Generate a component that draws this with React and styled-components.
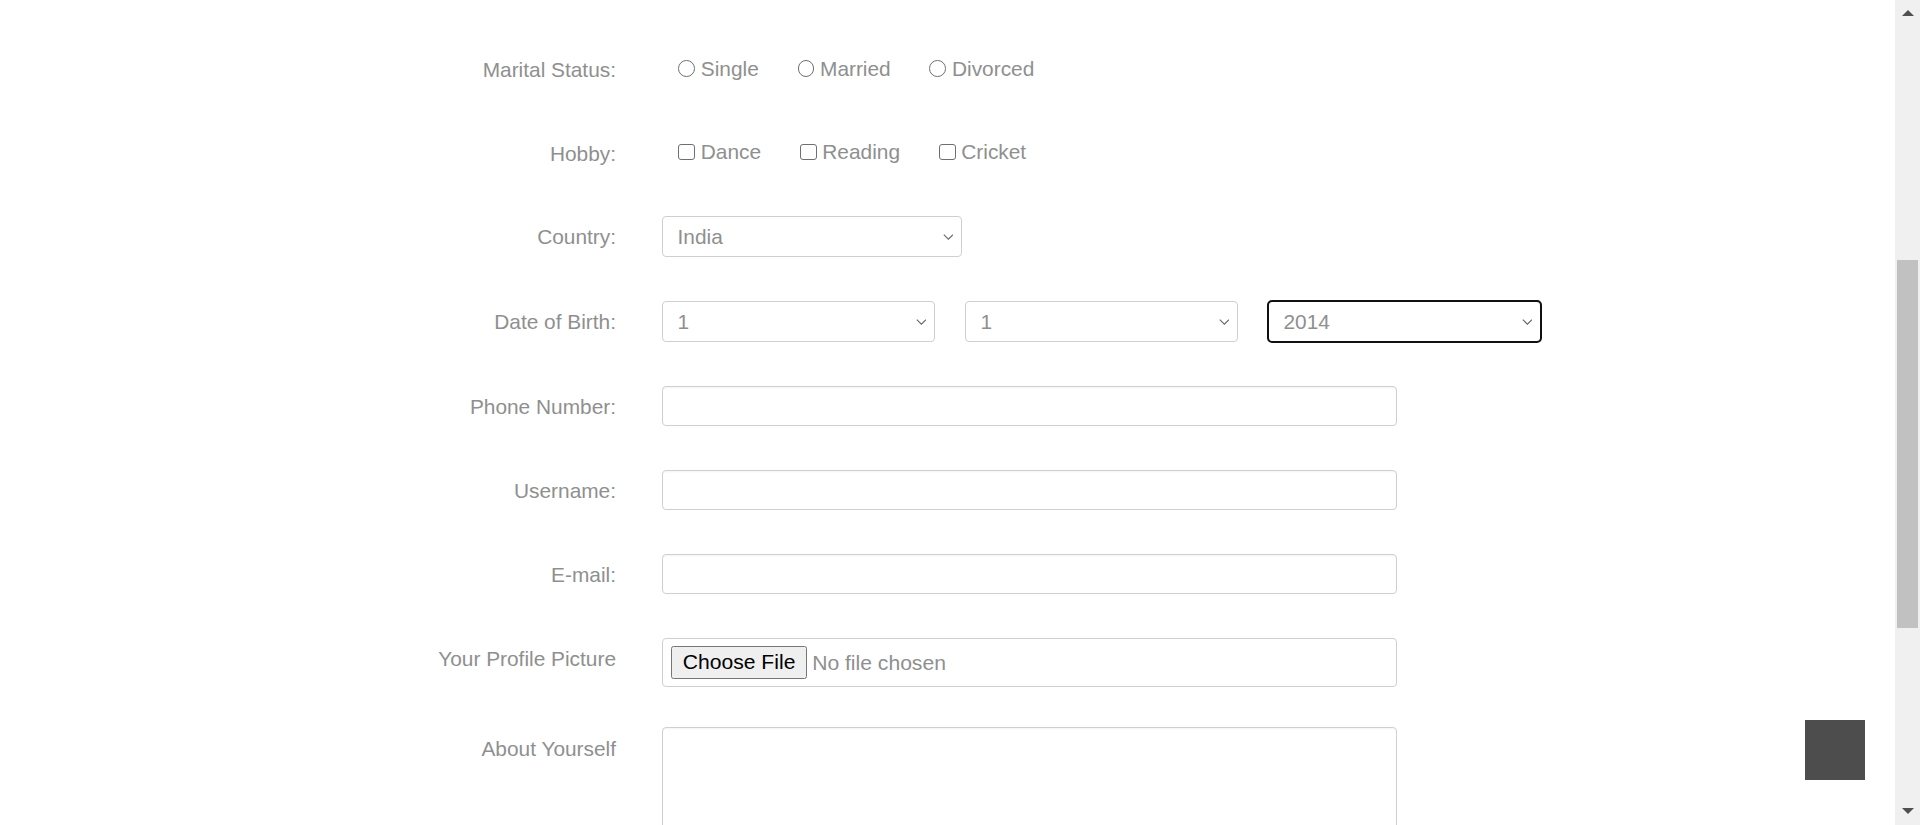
import { useLayoutEffect, useRef, useState } from "react";
import styled, { createGlobalStyle } from "styled-components";

const GlobalStyle = createGlobalStyle`
  html, body {
    margin: 0;
    padding: 0;
    background: #fff;
  }
`;

// the whole form is laid out at 125% like the reference
const Page = styled.div`
  zoom: 1.25;
  padding: 80px 0 196px;
  font-family: "Liberation Sans", Arial, sans-serif;
  font-size: 16.7px;
  color: #8f8f8f;
`;

const Title = styled.h1`
  margin: 0 0 72.8px 300px;
  padding-left: 229.6px;
  font-size: 32px;
  line-height: 40px;
  font-weight: normal;
  color: #666;
`;

const Form = styled.form`
  display: flex;
  flex-direction: column;
  gap: 34.8px;
  width: 1100px;
  margin-left: 300px;
`;

const Row = styled.div`
  display: grid;
  grid-template-columns: 192.8px 1fr;
  column-gap: 36.8px;
  align-items: start;
  margin-bottom: ${(p) => (p.$tight ? "-2.4px" : "0")};
`;

const Label = styled.label`
  display: block;
  text-align: right;
  padding-top: 6px;
  line-height: 22.4px;
  color: #8f8f8f;
  white-space: nowrap;
`;

const OptionGroup = styled.div`
  display: flex;
  align-items: center;
  gap: 31px;
  height: 32px;
  padding-left: 13px;
`;

const Option = styled.label`
  display: inline-flex;
  align-items: center;
  gap: 4.6px;
  color: #8f8f8f;
`;

const Choice = styled.input`
  appearance: none;
  margin: 0;
  width: 13.4px;
  height: 13.4px;
  border: 1px solid #6f6f6f;
  border-radius: ${(p) => (p.type === "radio" ? "50%" : "2.4px")};
  background: #fff;
  box-sizing: border-box;
`;

const SelectWrap = styled.div`
  position: relative;
  width: ${(p) => p.$width}px;
`;

const Select = styled.select`
  appearance: none;
  width: 100%;
  height: 33.2px;
  padding: 0 24px 0 11.6px;
  border: 1px solid #cfcfcf;
  border-radius: 3.2px;
  background: #fff;
  color: #8f8f8f;
  font-family: "Liberation Sans", Arial, sans-serif;
  font-size: 16.7px;
  box-sizing: border-box;
  outline: ${(p) => (p.$focused ? "1.6px solid #101010" : "none")};
  outline-offset: -1px;
`;

const Chevron = styled.svg`
  position: absolute;
  right: 7px;
  top: 50%;
  width: 8.6px;
  height: 5px;
  margin-top: -2px;
  pointer-events: none;
`;

const DateGroup = styled.div`
  display: flex;
  gap: 24px;
`;

const TextInput = styled.input`
  width: 588px;
  height: 32.4px;
  padding: 0 12px;
  border: 1px solid #cfcfcf;
  border-radius: 3.2px;
  box-shadow: inset 0 1px 1px rgba(0, 0, 0, 0.04);
  box-sizing: border-box;
  color: #8f8f8f;
  font-family: "Liberation Sans", Arial, sans-serif;
  font-size: 16.7px;
  outline: none;
`;

const FileInput = styled.input`
  width: 588px;
  height: 39.5px;
  padding: 5.6px 6.4px;
  border: 1px solid #cfcfcf;
  border-radius: 3.2px;
  box-sizing: border-box;
  color: #8f8f8f;
  font-family: "Liberation Sans", Arial, sans-serif;
  font-size: 16.9px;

  &::file-selector-button {
    height: 26.4px;
    padding: 0 8.6px;
    margin-right: 4px;
    border: 1px solid #767676;
    border-radius: 2px;
    background: #efefef;
    color: #000;
    font-family: "Liberation Sans", Arial, sans-serif;
    font-size: 16.9px;
  }
`;

const TextArea = styled.textarea`
  width: 588px;
  height: 120px;
  padding: 6px 12px;
  border: 1px solid #cfcfcf;
  border-radius: 3.2px;
  box-shadow: inset 0 1px 1px rgba(0, 0, 0, 0.04);
  box-sizing: border-box;
  resize: vertical;
  font-family: "Liberation Sans", Arial, sans-serif;
  font-size: 16.7px;
  outline: none;
`;

const SubmitButton = styled.button`
  height: 36px;
  padding: 0 24px;
  border: none;
  border-radius: 3.2px;
  background: #4d4d4d;
  color: #fff;
  font-family: "Liberation Sans", Arial, sans-serif;
  font-size: 16.7px;
`;

const BackToTop = styled.button`
  position: fixed;
  right: 44px;
  bottom: 36px;
  width: 48px;
  height: 48px;
  border: none;
  padding: 0;
  background: #4d4d4d;
`;

// window scrollbar, drawn since the browser hides its own
const Scrollbar = styled.div`
  position: fixed;
  top: 0;
  right: 0;
  bottom: 0;
  width: 25px;
  display: flex;
  flex-direction: column;
  background: #f0f0f0;
`;

const ScrollArrow = styled.div`
  height: 25px;
  display: flex;
  justify-content: center;
  align-items: ${(p) => (p.$down ? "flex-start" : "flex-start")};
  padding-top: ${(p) => (p.$down ? "8px" : "10px")};
  box-sizing: border-box;
`;

const ScrollTrack = styled.div`
  flex: 1;
  position: relative;
`;

const ScrollThumb = styled.div`
  position: absolute;
  left: 2px;
  right: 2px;
  background: #c1c1c1;
`;

const range = (from, to) => {
  const out = [];
  const step = from <= to ? 1 : -1;
  for (let i = from; step > 0 ? i <= to : i >= to; i += step) out.push(i);
  return out;
};

const countries = ["India", "USA", "UK", "Canada", "Australia"];

function Options({ type, name, items }) {
  return (
    <OptionGroup>
      {items.map((item) => (
        <Option key={item}>
          <Choice type={type} name={name} value={item} />
          {item}
        </Option>
      ))}
    </OptionGroup>
  );
}

function Dropdown({ width, focused, items, defaultValue }) {
  return (
    <SelectWrap $width={width}>
      <Select $focused={focused} defaultValue={defaultValue}>
        {items.map((i) => (
          <option key={i}>{i}</option>
        ))}
      </Select>
      <Chevron viewBox="0 0 10 6">
        <path
          d="M0.6 0.6 L5 5 L9.4 0.6"
          fill="none"
          stroke="#6a6a6a"
          strokeWidth="1.1"
        />
      </Chevron>
    </SelectWrap>
  );
}

function TextRow({ label, type = "text" }) {
  return (
    <Row>
      <Label>{label}</Label>
      <TextInput type={type} />
    </Row>
  );
}

const App = () => {
  const maritalRef = useRef(null);
  const [thumb, setThumb] = useState({ top: 0, height: 0 });

  // page is shown scrolled down to the marital status row
  useLayoutEffect(() => {
    const r = maritalRef.current.getBoundingClientRect();
    window.scrollTo(0, window.scrollY + r.top - 48.5);
    const docH = document.documentElement.scrollHeight;
    const viewH = window.innerHeight;
    const track = viewH - 50;
    const height = Math.max(20, (track * viewH) / docH);
    const top =
      docH > viewH ? (window.scrollY / (docH - viewH)) * (track - height) : 0;
    setThumb({ top, height });
  }, []);

  return (
    <>
      <GlobalStyle />
      <Page>
        <Title>Registration Form</Title>
        <Form onSubmit={(e) => e.preventDefault()}>
          <TextRow label="First Name:" />
          <TextRow label="Last Name:" />
          <TextRow label="Father Name:" />
          <Row>
            <Label>Gender:</Label>
            <Options type="radio" name="gender" items={["Male", "Female"]} />
          </Row>
          <Row ref={maritalRef}>
            <Label>Marital Status:</Label>
            <Options
              type="radio"
              name="marital"
              items={["Single", "Married", "Divorced"]}
            />
          </Row>
          <Row>
            <Label>Hobby:</Label>
            <Options
              type="checkbox"
              name="hobby"
              items={["Dance", "Reading", "Cricket"]}
            />
          </Row>
          <Row>
            <Label>Country:</Label>
            <Dropdown width={240} items={countries} defaultValue="India" />
          </Row>
          <Row>
            <Label>Date of Birth:</Label>
            <DateGroup>
              <Dropdown width={218.4} items={range(1, 31)} />
              <Dropdown width={218.4} items={range(1, 12)} />
              <Dropdown width={218.4} items={range(2014, 1950)} focused />
            </DateGroup>
          </Row>
          <TextRow label="Phone Number:" type="tel" />
          <TextRow label="Username:" />
          <TextRow label="E-mail:" type="email" />
          <Row $tight>
            <Label>Your Profile Picture</Label>
            <FileInput type="file" />
          </Row>
          <Row>
            <Label>About Yourself</Label>
            <TextArea />
          </Row>
          <Row>
            <span />
            <div>
              <SubmitButton type="submit">Submit</SubmitButton>
            </div>
          </Row>
        </Form>
        <BackToTop type="button" aria-label="Back to top" />
      </Page>
      <Scrollbar>
        <ScrollArrow>
          <svg width="12" height="6" viewBox="0 0 12 6">
            <path d="M6 0 L12 6 L0 6 Z" fill="#505050" />
          </svg>
        </ScrollArrow>
        <ScrollTrack>
          <ScrollThumb style={{ top: thumb.top, height: thumb.height }} />
        </ScrollTrack>
        <ScrollArrow $down>
          <svg width="12" height="6" viewBox="0 0 12 6">
            <path d="M0 0 L12 0 L6 6 Z" fill="#505050" />
          </svg>
        </ScrollArrow>
      </Scrollbar>
    </>
  );
};

export default App;
